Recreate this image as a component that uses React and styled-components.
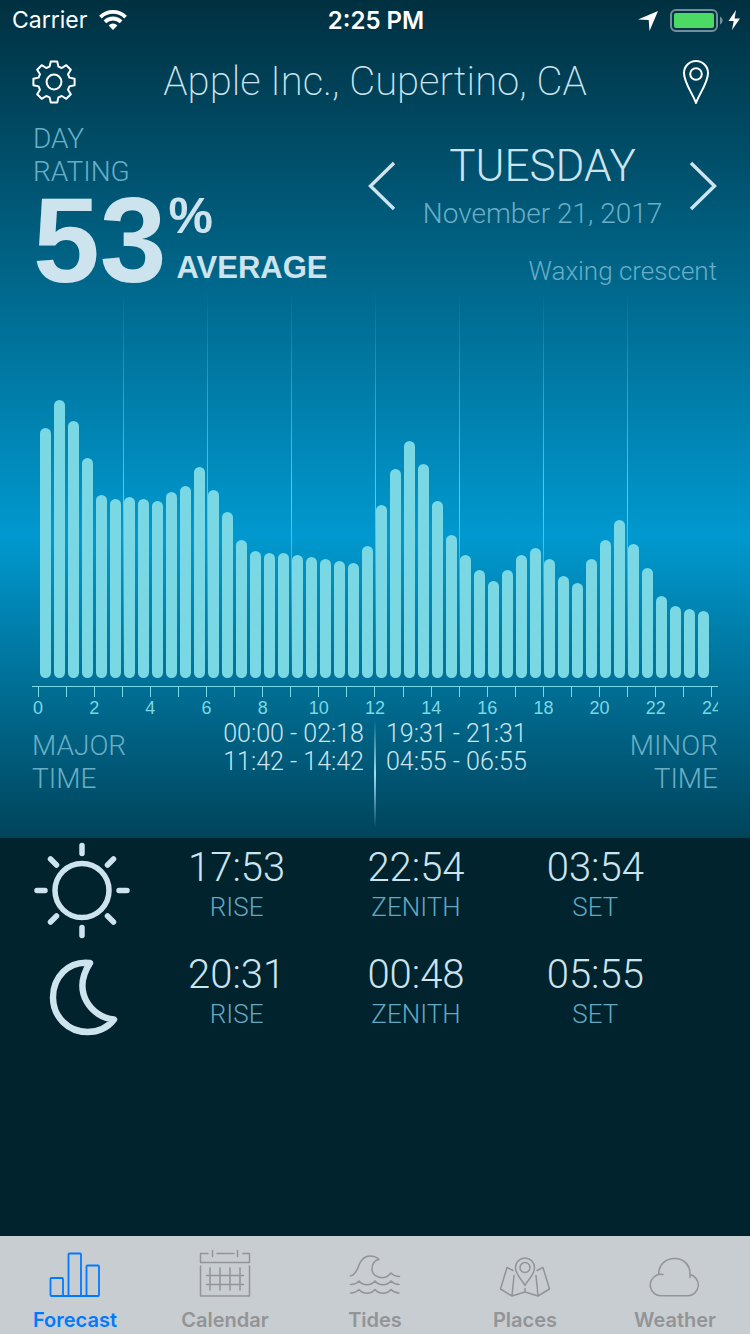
import React from 'react'
import styled, { createGlobalStyle } from 'styled-components'

const GlobalStyle = createGlobalStyle`
*, *::before, *::after {
    box-sizing: border-box;
}
body {
    margin: 0;
    background-color: #00232d;
    font-family: Roboto, 'Liberation Sans', sans-serif;
    font-weight: 300;
    color: #cde4ee;
}
h1, h2, p, dl, dt, dd {
    margin: 0;
    font-weight: inherit;
}
`

const Page = styled.div`
min-height: 100vh;
display: flex;
flex-direction: column;
`

const Hero = styled.section`
background: linear-gradient(to bottom, #003040 0%, #0099cf 64%, #00445b 100%);
padding-bottom: 8px;
`

const StatusBar = styled.div`
display: grid;
grid-template-columns: 1fr auto 1fr;
align-items: center;
height: 40px;
padding: 0 10px 0 12px;
font-family: Inter, 'Liberation Sans', sans-serif;
font-size: 23px;
font-weight: 400;
color: #fff;
`
const StatusGroup = styled.div`
display: flex;
align-items: center;
gap: 12px;
justify-content: ${props => props.$end ? 'flex-end' : 'flex-start'};
`
const Clock = styled.time`
font-size: 24px;
font-weight: 600;
`

const Header = styled.header`
display: flex;
align-items: center;
justify-content: space-between;
height: 80px;
padding: 3px 32px 0;
`
const Place = styled.h1`
font-size: 40px;
line-height: 48px;
font-weight: 200;
`
const IconButton = styled.button`
display: flex;
padding: 0;
border: 0;
background: none;
color: ${props => props.$soft ? '#cde4ee' : '#fff'};
cursor: pointer;
`

const Summary = styled.div`
display: flex;
justify-content: space-between;
height: 170px;
padding: 2px 33px 0;
`
const Label = styled.p`
font-size: 28px;
line-height: 33px;
color: #69aec7;
text-align: ${props => props.$right ? 'right' : 'left'};
`
const Rating = styled.div`
display: flex;
font-family: 'Liberation Sans', Arial, sans-serif;
font-weight: 700;
`
const Score = styled.span`
font-size: 120px;
line-height: 104px;
`
const ScoreSide = styled.div`
display: flex;
flex-direction: column;
padding-left: 2px;
`
const Percent = styled.span`
font-size: 50px;
line-height: 56px;
`
const Grade = styled.span`
padding-left: 8px;
font-size: 31px;
line-height: 48px;
`

const DayPanel = styled.div`
width: 51%;
padding-top: 16px;
`
const DayPicker = styled.div`
display: flex;
align-items: center;
justify-content: space-between;
text-align: center;
`
const Weekday = styled.h2`
font-size: 44px;
line-height: 56px;
`
const FullDate = styled.p`
font-size: 28px;
line-height: 40px;
color: #69aec7;
`
const MoonPhase = styled.p`
padding-top: 21px;
font-size: 26px;
line-height: 32px;
color: #69aec7;
text-align: right;
`

const Plot = styled.div`
position: relative;
height: 388px;
margin: 0 39px;
`
const HourLines = styled.div`
position: absolute;
inset: 0;
display: grid;
grid-template-columns: repeat(8, 1fr);
`
const HourLine = styled.span`
width: 1px;
background: linear-gradient(to bottom, rgba(122, 216, 228, 0), rgba(122, 216, 228, 0.8) 55%, rgba(122, 216, 228, 0));
visibility: ${props => props.$hidden ? 'hidden' : 'visible'};
`
const Bars = styled.div`
position: relative;
display: flex;
align-items: flex-end;
gap: 3px;
height: 100%;
padding: 0 2px 0 1px;
`
const Bar = styled.span`
flex: 1;
border-radius: 6px;
background-color: #7ad8e4;
`

const Axis = styled.div`
margin: 8px 32px 0;
border-top: 1px solid #7ad8e4;
overflow: hidden;
`
const Ticks = styled.div`
display: grid;
grid-template-columns: repeat(25, 1fr);
margin: 0 -8px;
`
const Tick = styled.span`
display: flex;
flex-direction: column;
align-items: center;
height: 32px;
font-family: 'Liberation Sans', Arial, sans-serif;
font-size: 18px;
font-weight: 400;
line-height: 22px;
color: #7ad8e4;

&::before {
    content: '';
    width: 1px;
    height: 10px;
    background-color: #7ad8e4;
}
`

const Times = styled.div`
display: grid;
grid-template-columns: 1fr auto 2px auto 1fr;
column-gap: 10px;
height: 111px;
padding: 1px 32px 0;
`
const TimesLabel = styled(Label)`
padding-top: 9px;
`
const Ranges = styled.p`
font-size: 25px;
line-height: 28px;
text-align: ${props => props.$right ? 'right' : 'left'};
`
const Divider = styled.span`
height: 108px;
background: linear-gradient(to bottom, rgba(160, 220, 250, 0), #a0dcfa 50%, rgba(160, 220, 250, 0));
`

const SkyList = styled.section`
flex: 1;
padding: 4px 65px 0 33px;
`
const SkyRow = styled.dl`
display: grid;
grid-template-columns: 114px repeat(3, 1fr);
height: 107px;
`
const SkyItem = styled.div`
display: flex;
flex-direction: column-reverse;
justify-content: flex-end;
text-align: center;
`
const SkyTime = styled.dd`
font-size: 40px;
line-height: 52px;
`
const SkyName = styled.dt`
font-size: 26px;
line-height: 26px;
color: #62a9c3;
`

const TabBar = styled.nav`
display: flex;
height: 98px;
background-color: #c8cdd1;
font-family: Inter, 'Liberation Sans', sans-serif;
`
const Tab = styled.a`
flex: 1;
display: flex;
flex-direction: column;
align-items: center;
padding-top: 13px;
font-size: 20px;
line-height: 24px;
font-weight: 600;
text-decoration: none;
color: ${props => props.$active ? '#007aff' : '#929497'};

svg {
    margin-bottom: 9px;
}
`

const bars = [
    250, 278, 257, 220, 183, 179, 181, 179, 177, 186, 192, 211,
    188, 166, 138, 127, 125, 125, 123, 121, 119, 117, 115, 132,
    173, 209, 237, 214, 177, 143, 123, 108, 97, 108, 123, 130,
    119, 102, 95, 119, 138, 158, 134, 110, 82, 72, 69, 67
]
const hours = Array.from({ length: 25 }, (_, i) => i)

const sky = [
    { name: 'Sun', rise: '17:53', zenith: '22:54', set: '03:54' },
    { name: 'Moon', rise: '20:31', zenith: '00:48', set: '05:55' }
]

// one gear tooth, turned in steps of 45 degrees
const tooth = [[-4.4, -15.4], [-3.2, -20.6], [3.2, -20.6], [4.4, -15.4]]
const gear = hours.slice(0, 8).flatMap(k => {
    const a = k * Math.PI / 4
    return tooth.map(([x, y]) => [
        (22 + x * Math.cos(a) - y * Math.sin(a)).toFixed(2),
        (22 + x * Math.sin(a) + y * Math.cos(a)).toFixed(2)
    ].join(','))
}).join(' ')

const Gear = () => (
    <svg width="44" height="44" viewBox="0 0 44 44" fill="none" stroke="currentColor" strokeWidth="2" strokeLinejoin="round">
        <polygon points={gear} />
        <circle cx="22" cy="22" r="7.4" />
    </svg>
)

const Pin = () => (
    <svg width="44" height="46" viewBox="0 0 44 46" fill="none" stroke="currentColor" strokeWidth="2" strokeLinejoin="round">
        <path d="M22 44C19 35 10 24 10 14a12 12 0 0 1 24 0c0 10-9 21-12 30z" />
        <circle cx="22" cy="15" r="5.8" />
    </svg>
)

const Wifi = () => (
    <svg width="28" height="20" viewBox="0 0 28 20" fill="none" stroke="currentColor" strokeWidth="3.8">
        <path d="M1.4 7.1a18 18 0 0 1 25.2 0" />
        <path d="M5.9 11.8a11.6 11.6 0 0 1 16.2 0" />
        <path d="M14 20l-4.4-4.6a6.2 6.2 0 0 1 8.8 0z" fill="currentColor" stroke="none" />
    </svg>
)

const StatusIcons = () => (
    <svg width="102" height="24" viewBox="0 0 102 24">
        <path d="M0 11.5L20 3l-8.5 20-.8-11z" fill="#fff" />
        <rect x="33" y="2" width="46" height="21" rx="5" fill="none" stroke="#fff" strokeOpacity=".45" strokeWidth="2" />
        <rect x="36" y="5" width="40" height="15" rx="2" fill="#4cd964" />
        <path d="M82 8.5c3.5 1.5 3.5 6.5 0 8z" fill="#fff" fillOpacity=".45" />
        <path d="M98 2l-7.5 11h5.2l-1.7 9L102 10.5h-5.4z" fill="#fff" />
    </svg>
)

const Chevron = ({ right }) => (
    <svg width="28" height="50" viewBox="0 0 28 50" fill="none" stroke="currentColor" strokeWidth="3.4">
        <path d={right ? 'M2 2l23.5 23L2 48' : 'M26 2L2.5 25 26 48'} />
    </svg>
)

const Sun = () => (
    <svg width="98" height="98" viewBox="0 0 98 98" fill="none" stroke="currentColor" strokeWidth="5.5" strokeLinecap="round">
        <circle cx="49" cy="48.5" r="27" />
        <path d="M49 3.5v8M49 85.5v8M4 48.5h8M86 48.5h8M17.5 17l6 6M80.5 17l-6 6M17.5 80l6-6M80.5 80l-6-6" />
    </svg>
)

const Moon = () => (
    <svg width="98" height="98" viewBox="0 0 98 98" fill="none" stroke="currentColor" strokeWidth="6.4" strokeLinejoin="round">
        <path d="M57 14C35 11.500 20 28.500 20 48.500c0 19 15 34.500 34.500 34.500C65 83 74 79.500 81 70.500 59 68.500 38 43.500 57 14z" />
    </svg>
)

const TabIcon = ({ children }) => (
    <svg width="52" height="50" viewBox="0 0 52 50" fill="none" stroke="currentColor" strokeWidth="1.5" strokeLinecap="round" strokeLinejoin="round">
        {children}
    </svg>
)

const tabs = [
    {
        name: 'Forecast',
        icon: <g strokeWidth="1.8"><rect x="1.5" y="29" width="12.5" height="18" rx="1" /><rect x="19.5" y="4.5" width="12.5" height="42.5" rx="1" /><rect x="37.5" y="16.5" width="12.5" height="30.5" rx="1" /><path d="M14 47h24" /></g>
    },
    {
        name: 'Calendar',
        icon: <path d="M9 4.5H1.500v9h49v-9H44M18 4.500h17M13.500 1.500v6M38.500 1.500v6M1.500 17v30h49V17M7.500 26.500h37M7.500 35.500h37M11 19v22M21 19v22M31 19v22M41 19v22" />
    },
    {
        name: 'Tides',
        icon: <path d="M1.500 27C6 26 8 22 10 16 12.500 10 16 7 21 7c3.500 0 6.500 1 9 3.500-4 .3-7 4-7 9.500 0 6 7 10.500 14 8 2-.8 3.500-2.200 5-4 2 2 5 3.500 8.500 3.500M1.500 35.500c3.500 0 6-1 8.500-3.500 4 5 12 5 16 0 4 5 12 5 16 0 2.500 2.500 5 3.500 8 3.500M1.500 44c3.500 0 6-1 8.500-3.500 4 5 12 5 16 0 4 5 12 5 16 0 2.500 2.500 5 3.500 8 3.500" />
    },
    {
        name: 'Places',
        icon: <><path d="M26 36.500c-2-5-9.500-10-9.500-18a9.500 9.500 0 0 1 19 0c0 8-7.500 13-9.500 18z" /><circle cx="26" cy="18.500" r="5" /><path d="M14 21.500l-6-3-6.500 21.500 11.500 7 13-4 13 4 11.500-7L44 18.500l-6 3M15 26.500L13 47M37 26.500L39 47M26 39.500v3.500" /></>
    },
    {
        name: 'Weather',
        icon: <path d="M14 25.500c-2-.6-4-.4-6 .5a10.800 10.800 0 0 0 4 20.800h27a10.800 10.800 0 0 0 2-21.300c.5-9-6-16-15.500-16-9 0-16 6.500-15.800 15.500M41 25.500v3" />
    }
]

const App = () => {
    return (
        <Page>
            <GlobalStyle />
            <Hero>
                <StatusBar>
                    <StatusGroup>
                        <span>Carrier</span>
                        <Wifi />
                    </StatusGroup>
                    <Clock>2:25 PM</Clock>
                    <StatusGroup $end>
                        <StatusIcons />
                    </StatusGroup>
                </StatusBar>
                <Header>
                    <IconButton type="button" aria-label="Settings"><Gear /></IconButton>
                    <Place>Apple Inc., Cupertino, CA</Place>
                    <IconButton type="button" aria-label="Location"><Pin /></IconButton>
                </Header>
                <Summary>
                    <div>
                        <Label>DAY<br />RATING</Label>
                        <Rating>
                            <Score>53</Score>
                            <ScoreSide>
                                <Percent>%</Percent>
                                <Grade>AVERAGE</Grade>
                            </ScoreSide>
                        </Rating>
                    </div>
                    <DayPanel>
                        <DayPicker>
                            <IconButton type="button" aria-label="Previous day" $soft><Chevron /></IconButton>
                            <div>
                                <Weekday>TUESDAY</Weekday>
                                <FullDate>November 21, 2017</FullDate>
                            </div>
                            <IconButton type="button" aria-label="Next day" $soft><Chevron right /></IconButton>
                        </DayPicker>
                        <MoonPhase>Waxing crescent</MoonPhase>
                    </DayPanel>
                </Summary>
                <Plot>
                    <HourLines>
                        {hours.slice(0, 8).map(h => <HourLine key={h} $hidden={h === 0} />)}
                    </HourLines>
                    <Bars>
                        {bars.map((height, id) => <Bar key={id} style={{ height }} />)}
                    </Bars>
                </Plot>
                <Axis>
                    <Ticks>
                        {hours.map(h => <Tick key={h}>{h % 2 === 0 && h}</Tick>)}
                    </Ticks>
                </Axis>
                <Times>
                    <TimesLabel>MAJOR<br />TIME</TimesLabel>
                    <Ranges $right>00:00 - 02:18<br />11:42 - 14:42</Ranges>
                    <Divider />
                    <Ranges>19:31 - 21:31<br />04:55 - 06:55</Ranges>
                    <TimesLabel $right>MINOR<br />TIME</TimesLabel>
                </Times>
            </Hero>
            <SkyList>
                {sky.map(body => (
                    <SkyRow key={body.name} aria-label={body.name}>
                        {body.name === 'Sun' ? <Sun /> : <Moon />}
                        <SkyItem><SkyName>RISE</SkyName><SkyTime>{body.rise}</SkyTime></SkyItem>
                        <SkyItem><SkyName>ZENITH</SkyName><SkyTime>{body.zenith}</SkyTime></SkyItem>
                        <SkyItem><SkyName>SET</SkyName><SkyTime>{body.set}</SkyTime></SkyItem>
                    </SkyRow>
                ))}
            </SkyList>
            <TabBar>
                {tabs.map((tab, id) => (
                    <Tab key={tab.name} href={`#${tab.name.toLowerCase()}`} $active={id === 0}>
                        <TabIcon>{tab.icon}</TabIcon>
                        {tab.name}
                    </Tab>
                ))}
            </TabBar>
        </Page>
    )
}

export default App
